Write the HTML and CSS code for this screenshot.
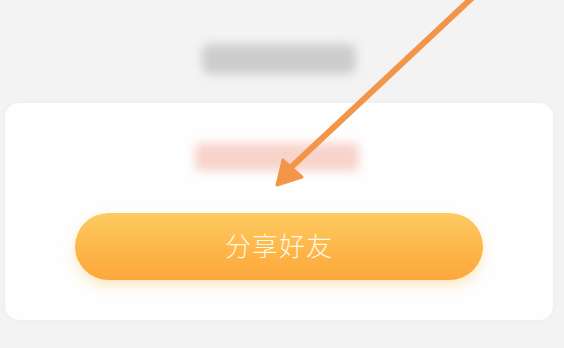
FILE: index.html
```html
<!DOCTYPE html>
<html>
<head>
  <meta charset="utf-8">
  <title>分享好友</title>
  <link rel="stylesheet" href="styles.css">
</head>
<body>
  <div class="page">
    <div class="header">
      <div class="blur-title"></div>
    </div>

    <div class="card">
      <div class="blur-note"></div>
      <button class="share-btn">分享好友</button>
    </div>
  </div>

  <svg class="arrow" width="564" height="348" viewBox="0 0 564 348">
    <line x1="474" y1="-4" x2="286" y2="172" stroke="#f39548" stroke-width="6" stroke-linecap="round" />
    <polygon points="277,185 283,160 302,177" fill="#f39548" stroke="#f39548" stroke-width="3" stroke-linejoin="round" />
  </svg>
</body>
</html>
```

FILE: styles.css
```css
:root {
  --bg: #f3f3f3;
  --card: #fefefe;
  --radius: 14px;
  --font: "Noto Sans CJK SC", "Noto Sans", sans-serif;
}
body {
  margin: 0;
  background-color: var(--bg);
  font-family: var(--font);
  overflow: hidden;
}
.page {
  display: flex;
  flex-direction: column;
  width: 564px;
  height: 348px;
}
.header {
  height: 103px;
  display: flex;
  justify-content: center;
  padding-top: 44px;
  box-sizing: border-box;
  padding-right: 6px;
}
.blur-title {
  width: 154px;
  height: 30px;
  background: #cdcdcd;
  border-radius: 8px;
  filter: blur(5px);
}
.card {
  margin: 0 11px 0 5px;
  height: 217px;
  background: var(--card);
  border-radius: var(--radius);
  box-shadow: 0 0 6px rgba(0, 0, 0, 0.03);
  display: flex;
  flex-direction: column;
  align-items: center;
}
.blur-note {
  margin-top: 40px;
  margin-right: 4px;
  width: 164px;
  height: 28px;
  background: #f8d3cb;
  border-radius: 6px;
  filter: blur(5px);
}
.share-btn {
  margin-top: 42px;
  width: 408px;
  height: 67px;
  border: none;
  border-radius: 34px;
  background: linear-gradient(to bottom, #fdcb62, #fdb447 60%, #fca83c);
  box-shadow: 0 6px 12px rgba(253, 196, 90, 0.35);
  color: #fff7e6;
  font-family: var(--font);
  font-size: 26px;
  font-weight: 300;
  letter-spacing: 1px;
  padding: 0;
  padding-bottom: 4px;
}
.arrow {
  position: absolute;
  left: 0;
  top: 0;
}
```
